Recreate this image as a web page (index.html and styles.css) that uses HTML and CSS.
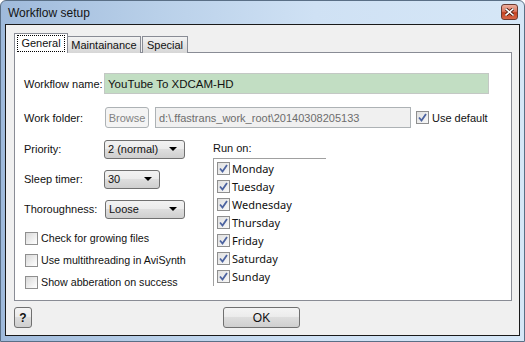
FILE: index.html
```html
<!DOCTYPE html>
<html lang="en">
<head>
  <meta charset="UTF-8" />
  <title>Workflow setup</title>
  <link rel="stylesheet" href="styles.css">
</head>
<body>
  <div class="window">
    <div class="titlebar">
      <div class="title">Workflow setup</div>
      <div class="close-btn">
        <svg width="9" height="8" viewBox="0 0 9 8">
          <path d="M1 1 L8 7 M8 1 L1 7" stroke="#4a1a10" stroke-width="3.2" stroke-linecap="square"/>
          <path d="M1 1 L8 7 M8 1 L1 7" stroke="#ffffff" stroke-width="1.6" stroke-linecap="square"/>
        </svg>
      </div>
    </div>

    <div class="client">
      <div class="tabs">
        <div class="tab active"><span class="focus">General</span></div>
        <div class="tab">Maintainance</div>
        <div class="tab">Special</div>
      </div>

      <div class="panel">
        <div class="row name-row">
          <div class="label">Workflow name:</div>
          <div class="input green">YouTube To XDCAM-HD</div>
        </div>

        <div class="row folder-row">
          <div class="label">Work folder:</div>
          <div class="button disabled">Browse</div>
          <div class="input disabled-input">d:\.ffastrans_work_root\20140308205133</div>
          <label class="checkrow use-default">
            <span class="check on"><svg width="9" height="9" viewBox="0 0 9 9"><path d="M1 4.5 L3.5 7.5 L8 1" fill="none" stroke="#4c63a0" stroke-width="1.8"/></svg></span>
            Use default
          </label>
        </div>

        <div class="lower">
          <div class="left-col">
            <div class="field">
              <div class="label">Priority:</div>
              <div class="select w81">2 (normal)<span class="arrow"></span></div>
            </div>
            <div class="field">
              <div class="label">Sleep timer:</div>
              <div class="select w56">30<span class="arrow"></span></div>
            </div>
            <div class="field">
              <div class="label">Thoroughness:</div>
              <div class="select w80">Loose<span class="arrow"></span></div>
            </div>

            <div class="options">
              <label class="checkrow"><span class="check"></span>Check for growing files</label>
              <label class="checkrow"><span class="check"></span>Use multithreading in AviSynth</label>
              <label class="checkrow"><span class="check"></span>Show abberation on success</label>
            </div>
          </div>

          <div class="right-col">
            <div class="label run-label">Run on:</div>
            <div class="listbox">
              <div class="day"><span class="check on"><svg width="9" height="9" viewBox="0 0 9 9"><path d="M1 4.5 L3.5 7.5 L8 1" fill="none" stroke="#4c63a0" stroke-width="1.8"/></svg></span>Monday</div>
              <div class="day"><span class="check on"><svg width="9" height="9" viewBox="0 0 9 9"><path d="M1 4.5 L3.5 7.5 L8 1" fill="none" stroke="#4c63a0" stroke-width="1.8"/></svg></span>Tuesday</div>
              <div class="day"><span class="check on"><svg width="9" height="9" viewBox="0 0 9 9"><path d="M1 4.5 L3.5 7.5 L8 1" fill="none" stroke="#4c63a0" stroke-width="1.8"/></svg></span>Wednesday</div>
              <div class="day"><span class="check on"><svg width="9" height="9" viewBox="0 0 9 9"><path d="M1 4.5 L3.5 7.5 L8 1" fill="none" stroke="#4c63a0" stroke-width="1.8"/></svg></span>Thursday</div>
              <div class="day"><span class="check on"><svg width="9" height="9" viewBox="0 0 9 9"><path d="M1 4.5 L3.5 7.5 L8 1" fill="none" stroke="#4c63a0" stroke-width="1.8"/></svg></span>Friday</div>
              <div class="day"><span class="check on"><svg width="9" height="9" viewBox="0 0 9 9"><path d="M1 4.5 L3.5 7.5 L8 1" fill="none" stroke="#4c63a0" stroke-width="1.8"/></svg></span>Saturday</div>
              <div class="day"><span class="check on"><svg width="9" height="9" viewBox="0 0 9 9"><path d="M1 4.5 L3.5 7.5 L8 1" fill="none" stroke="#4c63a0" stroke-width="1.8"/></svg></span>Sunday</div>
            </div>
          </div>
        </div>
      </div>

      <div class="footer">
        <div class="button help">?</div>
        <div class="button ok">OK</div>
      </div>
    </div>
  </div>
</body>
</html>
```

FILE: styles.css
```css
body {
  margin: 0;
  font-family: 'Liberation Sans', Arial, sans-serif;
  font-size: 11px;
  color: #111;
  background: #ffffff;
}

.window {
  width: 525px;
  height: 342px;
  box-sizing: border-box;
  border: 1px solid #5a6f86;
  border-radius: 6px 6px 0 0;
  background: linear-gradient(90deg, #9fbadb 0%, #b9d0e9 30%, #cfe1f4 60%, #d6e7f7 100%);
  overflow: hidden;
}

.titlebar {
  height: 23px;
  display: flex;
  align-items: center;
  justify-content: space-between;
  padding: 0 6px 0 7px;
}

.title {
  font-size: 12px;
  color: #141414;
  margin-top: 1px;
}

.close-btn {
  width: 15px;
  height: 14px;
  border: 1px solid #6b3b32;
  border-radius: 3px;
  background: linear-gradient(#eeb0a0 0%, #dc7860 45%, #c2401f 55%, #d9694a 100%);
  display: flex;
  align-items: center;
  justify-content: center;
  margin-top: -1px;
}

.client {
  margin: 0 4px;
  height: 312px;
  box-sizing: border-box;
  border: 1px solid #1a1a1a;
  background: #f0f0f0;
  padding: 8px 0 0 8px;
}

/* tabs */
.tabs {
  display: flex;
  align-items: flex-end;
  height: 20px;
  margin-bottom: -1px;
  position: relative;
  z-index: 1;
}

.tab {
  height: 16px;
  box-sizing: content-box;
  border: 1px solid #898c95;
  border-bottom: none;
  background: linear-gradient(#f3f3f3, #e4e4e4 50%, #d6d6d6);
  display: flex;
  align-items: center;
  justify-content: center;
  padding: 0 3px;
}

.tabs .tab:nth-child(2) { width: 66px; border-left: none; }
.tabs .tab:nth-child(3) { width: 38px; margin-left: 1px; }

.tab.active {
  width: 46px;
  height: 19px;
  background: #ffffff;
}

.focus {
  border: 1px dotted #000;
  padding: 1px 3px 2px;
}

.panel {
  width: 498px;
  height: 249px;
  box-sizing: border-box;
  border: 1px solid #898c95;
  background: #ffffff;
  padding: 20px 0 0 9px;
}

.row {
  display: flex;
  align-items: center;
  height: 21px;
}

.label {
  width: 80px;
  flex-shrink: 0;
}

.input {
  height: 21px;
  box-sizing: border-box;
  border: 1px solid #abadb3;
  display: flex;
  align-items: center;
  padding-left: 3px;
}

.input.green {
  width: 385px;
  background: #c2dec3;
  border-color: #c3c8c4;
  font-size: 11.5px;
}

.folder-row {
  margin-top: 13px;
}

.button {
  box-sizing: border-box;
  border: 1px solid #707070;
  border-radius: 3px;
  background: linear-gradient(#f4f4f4, #ebebeb 49%, #dddddd 50%, #cfcfcf);
  display: flex;
  align-items: center;
  justify-content: center;
}

.button.disabled {
  width: 44px;
  height: 21px;
  margin-left: 1px;
  border-color: #adb2b5;
  background: #f4f4f4;
  color: #838383;
}

.input.disabled-input {
  width: 256px;
  margin-left: 6px;
  background: #f0f0f0;
  border-color: #adb2b5;
  color: #6d6d6d;
}

.checkrow {
  display: flex;
  align-items: center;
  gap: 3px;
}

.use-default {
  margin-left: 5px;
}

.check {
  width: 13px;
  height: 13px;
  box-sizing: border-box;
  border: 1px solid #8f8f8f;
  background: linear-gradient(135deg, #d8d8d8, #f4f4f4 70%, #ffffff);
  display: inline-flex;
  align-items: center;
  justify-content: center;
  flex-shrink: 0;
}

.check.on {
  background: linear-gradient(135deg, #e0e0e0, #f8f8f8);
}

/* lower area */
.lower {
  display: flex;
  margin-top: 11px;
}

.left-col {
  width: 189px;
  display: flex;
  flex-direction: column;
}

.field {
  display: flex;
  align-items: center;
  height: 20px;
  margin-bottom: 10px;
}

.select {
  height: 19px;
  box-sizing: border-box;
  border: 1px solid #707070;
  border-radius: 3px;
  background: linear-gradient(#f2f2f2, #ebebeb 49%, #dddddd 50%, #cfcfcf);
  display: flex;
  align-items: center;
  justify-content: space-between;
  padding: 0 7px 0 3px;
}

.select.w81 { width: 81px; }
.select.w56 { width: 56px; }
.select.w80 { width: 80px; margin-left: 1px; }

.arrow {
  width: 0;
  height: 0;
  border-left: 4px solid transparent;
  border-right: 4px solid transparent;
  border-top: 4px solid #000;
}

.options {
  margin-top: -2px;
  margin-left: 1px;
  font-size: 10.7px;
}

.options .checkrow {
  height: 22px;
}

.right-col {
  display: flex;
  flex-direction: column;
}

.run-label {
  height: 19px;
  line-height: 18px;
}

.listbox {
  width: 113px;
  height: 128px;
  box-sizing: border-box;
  border-top: 1px solid #a0a0a0;
  border-left: 1px solid #a0a0a0;
  padding-left: 3px;
  font-family: 'Noto Sans', sans-serif;
  font-size: 11px;
  color: #101010;
}

.day {
  height: 18px;
  display: flex;
  align-items: center;
  gap: 2px;
}

.footer {
  width: 498px;
  display: flex;
  align-items: center;
  margin-top: 6px;
}

.button.help {
  width: 18px;
  height: 21px;
  font-weight: bold;
  font-size: 12px;
}

.button.ok {
  width: 77px;
  height: 21px;
  margin-left: 191px;
  font-size: 12px;
}
```
